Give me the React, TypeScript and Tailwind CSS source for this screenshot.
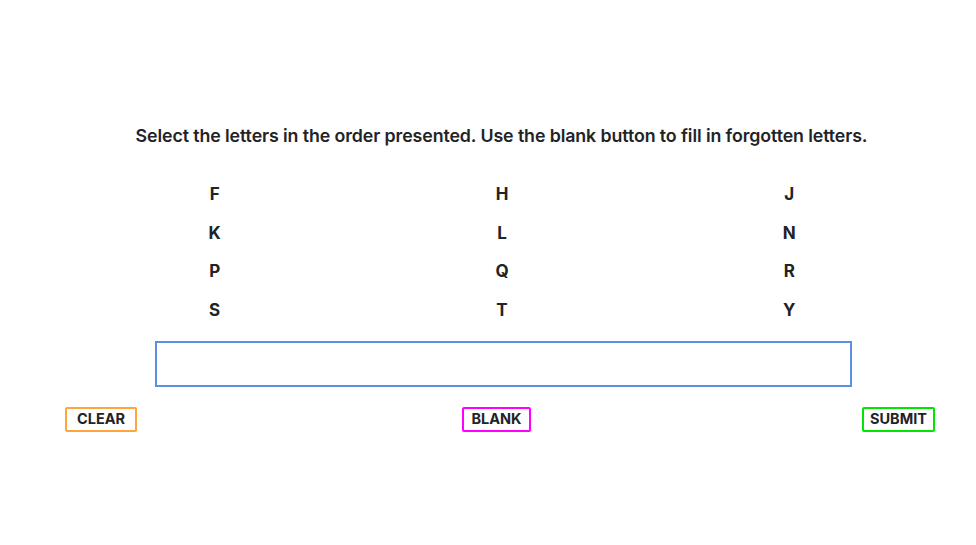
import type { ReactNode } from 'react';

const letters = ['F', 'H', 'J', 'K', 'L', 'N', 'P', 'Q', 'R', 'S', 'T', 'Y'];

function ActionButton({ border, width, children }: { border: string; width: string; children: ReactNode }) {
  return (
    <button
      type="button"
      className={`h-[25px] rounded-[2px] border-[2.5px] bg-white text-[14.5px] font-bold leading-none text-[#222326] ${width} ${border}`}
    >
      {children}
    </button>
  );
}

export default function App() {
  return (
    <div className="min-h-screen w-full bg-white text-[#222326]" style={{ fontFamily: 'Inter, "Noto Sans", sans-serif' }}>
      <div className="ml-[65px] w-[870px] pt-[124px]">
        <p className="ml-[3px] text-center text-[17.8px] font-semibold leading-[24px] tracking-[-0.1px]">
          Select the letters in the order presented. Use the blank button to fill in forgotten letters.
        </p>

        <div className="ml-[6px] mr-[2px] mt-[34px] grid grid-cols-3 gap-y-[14.5px]">
          {letters.map((l) => (
            <div key={l} className="text-center text-[17px] font-bold leading-[24px]">
              {l}
            </div>
          ))}
        </div>

        <div className="ml-[90px] mt-[19px] h-[46px] w-[697px] border-2 border-[#5b8ee6] bg-white" />

        <div className="mt-[20px] flex items-center justify-between">
          <ActionButton border="border-[#ffa53b]" width="w-[72px]">CLEAR</ActionButton>
          <div className="mr-[6px] flex">
            <ActionButton border="border-[#ff00ff]" width="w-[69px]">BLANK</ActionButton>
          </div>
          <ActionButton border="border-[#00e600]" width="w-[73px]">SUBMIT</ActionButton>
        </div>
      </div>
    </div>
  );
}
